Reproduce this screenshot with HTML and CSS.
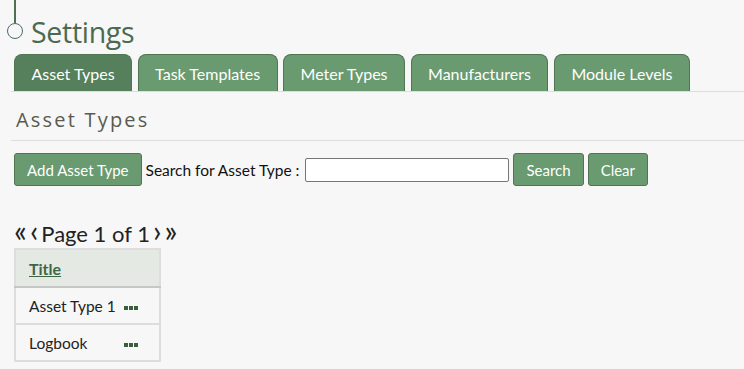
FILE: index.html
```html
<!DOCTYPE html>
<html lang="en">
<head>
    <meta charset="UTF-8">
    <title>Settings</title>
    <link rel="stylesheet" href="styles.css">
</head>
<body>
    <div class="page-title">
        <div class="timeline">
            <span class="timeline-line"></span>
            <span class="timeline-dot"></span>
        </div>
        <h1>Settings</h1>
    </div>
    <div class="tabs">
        <a class="tab active">Asset Types</a>
        <a class="tab">Task Templates</a>
        <a class="tab">Meter Types</a>
        <a class="tab">Manufacturers</a>
        <a class="tab">Module Levels</a>
    </div>
    <h2 class="section-title">Asset Types</h2>
    <div class="toolbar">
        <button class="button">Add Asset Type</button>
        <label class="search-label" for="search">Search for Asset Type :</label>
        <input type="text" id="search" class="search-input">
        <button class="button">Search</button>
        <button class="button">Clear</button>
    </div>
    <div class="pager">
        <span class="pager-arrow">&laquo;</span>
        <span class="pager-arrow">&lsaquo;</span>
        <span>Page 1 of 1</span>
        <span class="pager-arrow">&rsaquo;</span>
        <span class="pager-arrow">&raquo;</span>
    </div>
    <table class="grid">
        <thead>
            <tr><th colspan="2"><a href="#">Title</a></th></tr>
        </thead>
        <tbody>
            <tr><td>Asset Type 1</td><td class="menu"><span></span><span></span><span></span></td></tr>
            <tr><td>Logbook</td><td class="menu"><span></span><span></span><span></span></td></tr>
        </tbody>
    </table>
</body>
</html>
```

FILE: styles.css
```css
body {
    font-family: 'Lato', 'Open Sans', sans-serif;
    background: #f7f7f7;
    color: #222;
    margin: 0;
    padding: 0 0 0 14px;
}
.page-title {
    display: flex;
    align-items: flex-end;
    height: 48px;
}
.timeline {
    display: flex;
    flex-direction: column;
    align-items: center;
    width: 16px;
    margin-left: -7px;
    align-self: flex-start;
}
.timeline-line {
    width: 2px;
    height: 23px;
    background: #4f7052;
}
.timeline-dot {
    width: 14px;
    height: 14px;
    border: 1.5px solid #4a6b6f;
    border-radius: 50%;
}
.page-title h1 {
    margin: 0 0 -2px 8px;
    font-family: 'Open Sans', sans-serif;
    font-weight: normal;
    font-size: 28.5px;
    line-height: 36px;
    color: #4b6a4e;
    letter-spacing: -0.3px;
}
.tabs {
    display: flex;
    gap: 5.5px;
    margin: 6px 0 0 -3px;
    padding-left: 3px;
    border-bottom: 1px solid #ddd;
}
.tab {
    display: block;
    padding: 0 16.5px;
    height: 36px;
    line-height: 37px;
    font-size: 16px;
    color: #fff;
    background: #6a9a70;
    border: 1px solid #4f7553;
    border-bottom: none;
    border-radius: 8px 8px 0 0;
}
.tab.active {
    background: #567f5b;
}
.section-title {
    margin: 0 0 0 -3px;
    padding: 14px 0 7px 5px;
    font-family: 'Open Sans', sans-serif;
    font-weight: normal;
    font-size: 20px;
    letter-spacing: 2.2px;
    color: #5a5a4e;
    border-bottom: 1px solid #ddd;
}
.toolbar {
    display: flex;
    align-items: center;
    gap: 4px;
    margin-top: 12px;
}
.button {
    font-family: 'Lato', 'Open Sans', sans-serif;
    font-size: 15px;
    color: #fff;
    background: #6a9a70;
    border: 1px solid #4f7553;
    border-radius: 3px;
    height: 33px;
    padding: 0 12px;
}
.search-label {
    font-size: 15.5px;
    color: #111;
}
.search-input {
    width: 200px;
    height: 20px;
    margin-left: 2px;
    border: 1px solid #777;
    border-radius: 2px;
    padding: 1px 1px;
    background: #fff;
}
.pager {
    display: flex;
    align-items: baseline;
    gap: 3px;
    margin-top: 30px;
    font-size: 22px;
    line-height: 28px;
    color: #222;
}
.pager-arrow {
    font-size: 30px;
    line-height: 28px;
}
.grid {
    border-collapse: collapse;
    border: 2px solid #ddd;
    margin-top: 0;
    font-size: 15.5px;
}
.grid th {
    background: #e4e9e4;
    text-align: left;
    padding: 0 13px;
    height: 36px;
    border-bottom: 2px solid #c7c7c7;
}
.grid th a {
    color: #3f6645;
    font-weight: bold;
    font-size: 16px;
}
.grid td {
    height: 35px;
    padding: 0 0 0 13px;
    background: #f7f7f7;
    border-bottom: 2px solid #ddd;
}
.grid td.menu {
    padding: 0 20px 0 8px;
    white-space: nowrap;
}
.menu span {
    display: inline-block;
    width: 4px;
    height: 4px;
    margin-right: 1px;
    background: #3a5f3f;
    vertical-align: middle;
}
```
